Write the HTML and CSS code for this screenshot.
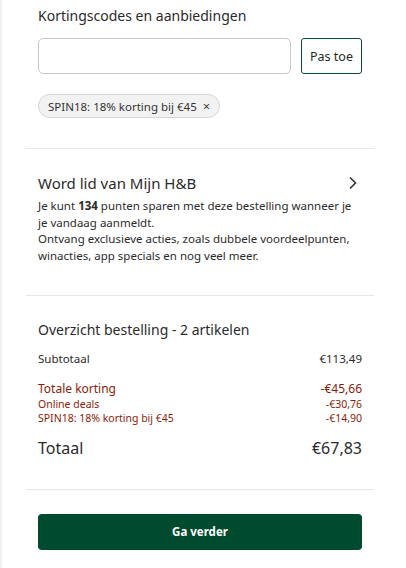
FILE: index.html
```html
<!DOCTYPE html>
<html lang="nl">
<head>
<meta charset="utf-8">
<link rel="stylesheet" href="styles.css">
</head>
<body>
<div class="page">
  <section class="block promo">
    <h2 class="title">Kortingscodes en aanbiedingen</h2>
    <div class="code-row">
      <input class="code-input" type="text" aria-label="Kortingscode">
      <button class="btn-outline">Pas toe</button>
    </div>
    <div class="chip">SPIN18: 18% korting bij €45 <span class="chip-x">×</span></div>
  </section>
  <hr class="divider">
  <section class="block member">
    <div class="member-head">
      <h2 class="title-lg">Word lid van Mijn H&amp;B</h2>
      <svg class="chev" width="10" height="14" viewBox="0 0 10 14"><path d="M2 1.5 L7.5 7 L2 12.5" fill="none" stroke="#333" stroke-width="1.6"/></svg>
    </div>
    <p class="member-text">Je kunt <b>134</b> punten sparen met deze bestelling wanneer je je vandaag aanmeldt.<br>Ontvang exclusieve acties, zoals dubbele voordeelpunten, winacties, app specials en nog veel meer.</p>
  </section>
  <hr class="divider">
  <section class="block summary">
    <h2 class="title">Overzicht bestelling - 2 artikelen</h2>
    <div class="row sub"><span>Subtotaal</span><span>€113,49</span></div>
    <div class="discounts">
      <div class="row disc-total"><span>Totale korting</span><span>-€45,66</span></div>
      <div class="row disc"><span>Online deals</span><span>-€30,76</span></div>
      <div class="row disc"><span>SPIN18: 18% korting bij €45</span><span>-€14,90</span></div>
    </div>
    <div class="row total"><span>Totaal</span><span>€67,83</span></div>
  </section>
  <hr class="divider">
  <section class="block cta">
    <button class="btn-primary">Ga verder</button>
  </section>
</div>
</body>
</html>
```
FILE: styles.css
```css
* { box-sizing: border-box; }
html, body { margin: 0; padding: 0; background: #fff; }
body {
  font-family: "Noto Sans", "DejaVu Sans", sans-serif;
  color: #2b2b2b;
  border-left: 2px solid #f1f1f1;
  min-height: 568px;
}
.page {
  width: 348px;
  margin-left: 24px;
}
.block { padding: 0 12px; }
.divider { border: 0; border-top: 1px solid #e6e6e6; margin: 0; }

.title {
  margin: 0;
  font-size: 14px;
  font-weight: 400;
  line-height: 20px;
  color: #2b2b2b;
}
.promo { padding-top: 6px; padding-bottom: 30px; }
.code-row { display: flex; gap: 10px; margin-top: 12px; }
.code-input {
  flex: 1;
  height: 36px;
  border: 1px solid #c8c8c8;
  border-radius: 5px;
  font: inherit;
}
.btn-outline {
  width: 61px;
  height: 36px;
  border: 1px solid #0c4a33;
  border-radius: 3px;
  background: #fff;
  color: #1f2a20;
  font-family: inherit;
  font-size: 12.5px;
  padding: 0;
}
.chip {
  display: inline-flex;
  align-items: center;
  margin-top: 20px;
  height: 24px;
  padding: 0 9px 0 9px;
  border: 1px solid #d6d6d6;
  border-radius: 12px;
  background: #f2f2f2;
  font-size: 11.5px;
  color: #333;
}
.chip-x { margin-left: 6px; font-size: 13px; color: #444; }

.member { padding-top: 24px; padding-bottom: 30px; }
.member-head { display: flex; justify-content: space-between; align-items: center; }
.title-lg { margin: 0; font-size: 15px; font-weight: 400; line-height: 20px; color: #2b2b2b; }
.chev { margin-right: 4px; }
.member-text { margin: 5px 0 0; font-size: 11.5px; line-height: 16.7px; color: #2b2b2b; }
.member-text b { font-weight: 700; }

.summary { padding-top: 24px; padding-bottom: 30px; }
.row { display: flex; justify-content: space-between; }
.sub { margin-top: 11px; font-size: 11.5px; line-height: 16px; }
.discounts { margin-top: 14px; color: #8a1c0a; }
.disc-total { font-size: 12px; line-height: 16px; }
.disc { font-size: 10.5px; line-height: 14.5px; }
.total { margin-top: 11px; font-size: 16px; line-height: 22px; }

.cta { padding-top: 24px; }
.btn-primary {
  width: 100%;
  height: 36px;
  border: 0;
  border-radius: 4px;
  background: #004a2f;
  color: #fff;
  font-family: inherit;
  font-weight: 700;
  font-size: 11.5px;
}
```
